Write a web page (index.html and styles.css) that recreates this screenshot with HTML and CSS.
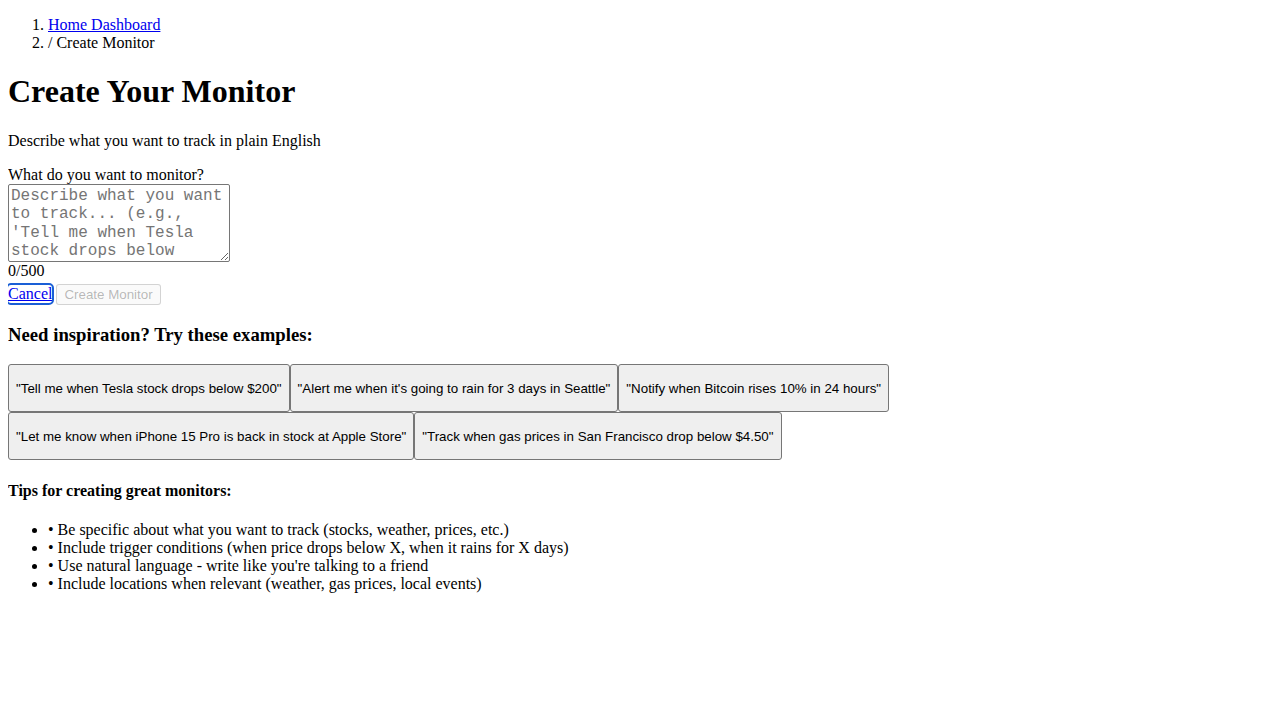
FILE: index.html
```html
<!DOCTYPE html>
<html lang="en">
<head>
<meta charset="utf-8">
<title>Create Monitor</title>
<link rel="stylesheet" href="styles.css">
</head>
<body class="page">
<nav class="crumbs">
  <ol class="crumb-list">
    <li><a href="#" class="link">Home Dashboard</a></li>
    <li>/ Create Monitor</li>
  </ol>
</nav>
<h1 class="title">Create Your Monitor</h1>
<p class="subtitle">Describe what you want to track in plain English</p>
<form class="monitor-form">
  <div class="field">
    <label class="field-label" for="q">What do you want to monitor?</label>
    <textarea id="q" class="field-input" rows="4" placeholder="Describe what you want to track... (e.g., 'Tell me when Tesla stock drops below $200')"></textarea>
    <div class="counter">0/500</div>
  </div>
  <div class="actions">
    <a href="#" class="link cancel">Cancel</a>
    <button type="submit" class="btn" disabled>Create Monitor</button>
  </div>
</form>
<h3 class="section-title">Need inspiration? Try these examples:</h3>
<div class="examples">
  <button type="button" class="btn example">"Tell me when Tesla stock drops below $200"</button>
  <button type="button" class="btn example">"Alert me when it's going to rain for 3 days in Seattle"</button>
  <button type="button" class="btn example">"Notify when Bitcoin rises 10% in 24 hours"</button>
  <button type="button" class="btn example">"Let me know when iPhone 15 Pro is back in stock at Apple Store"</button>
  <button type="button" class="btn example">"Track when gas prices in San Francisco drop below $4.50"</button>
</div>
<h4 class="tips-title">Tips for creating great monitors:</h4>
<ul class="tips">
  <li>• Be specific about what you want to track (stocks, weather, prices, etc.)</li>
  <li>• Include trigger conditions (when price drops below X, when it rains for X days)</li>
  <li>• Use natural language - write like you're talking to a friend</li>
  <li>• Include locations when relevant (weather, gas prices, local events)</li>
</ul>
</body>
</html>
```
FILE: styles.css
```css
.page {
  margin: 0 8px 8px;
  font-family: "Liberation Serif", "Times New Roman", serif;
  font-size: 16px;
  color: #000;
  background: #fff;
}
.crumb-list {
  margin: 16px 0;
  padding-left: 40px;
}
.link {
  color: #0000ee;
  text-decoration: underline;
}
.title {
  font-size: 32px;
  font-weight: bold;
  margin: 21.44px 0;
}
.subtitle {
  margin: 16px 0;
}
.monitor-form {
  margin: 0;
}
.field-label {
  display: block;
}
.field-input {
  display: block;
  box-sizing: border-box;
  width: 222px;
  height: 78px;
  margin: 0;
  padding: 2px;
  font-family: "Liberation Mono", "Courier New", monospace;
  font-size: 16px;
  line-height: 18.5px;
  border: 1px solid #767676;
  border-radius: 2px;
  resize: both;
  overflow: hidden;
}
.field-input::placeholder {
  color: #757575;
}
.actions {
  display: flex;
  align-items: center;
  gap: 4px;
  margin-top: 4px;
}
.cancel {
  outline: 2px solid #1a5fd6;
  outline-offset: 0;
  border-radius: 3px;
}
.btn {
  font-family: "Liberation Sans", Arial, sans-serif;
  font-size: 13.333px;
  padding: 2px 7px;
  margin: 0;
  border: 1px solid #767676;
  border-radius: 3px;
  background: #efefef;
  color: #000;
}
.btn:disabled {
  color: rgba(16, 16, 16, 0.3);
  background: rgba(239, 239, 239, 0.3);
  border-color: rgba(118, 118, 118, 0.3);
}
.section-title {
  font-size: 18.72px;
  margin: 18.72px 0;
}
.examples {
  display: flex;
  flex-wrap: wrap;
  max-width: 900px;
}
.example {
  height: 48px;
  padding: 0 7px;
}
.tips-title {
  font-size: 16px;
  margin: 21.28px 0;
}
.tips {
  margin: 16px 0;
  padding-left: 40px;
}
```
